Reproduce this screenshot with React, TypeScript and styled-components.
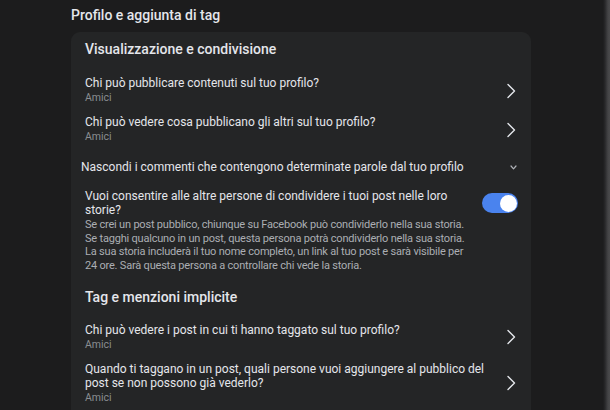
import { FC } from 'react';
import styled, { createGlobalStyle } from 'styled-components';

const GlobalStyle = createGlobalStyle`
    html, body {
        margin: 0;
        padding: 0;
        background: #1c1c1d;
    }
    body {
        font-family: Roboto, "Liberation Sans", sans-serif;
        color: #e4e6eb;
        -webkit-font-smoothing: antialiased;
    }
`;

const Page = styled.div`
    width: 610px;
    height: 410px;
    overflow: hidden;
    box-sizing: border-box;
    padding: 6px 0 0 71px;
    background: linear-gradient(to right, #1c1c1d 603px, #28282a 605px, #444446 608px, #4a4a4c 610px);
`;

const PageTitle = styled.h1`
    margin: 0 0 8px 0;
    font-size: 14px;
    line-height: 18px;
    font-weight: 500;
    color: #e4e6eb;
`;

const Card = styled.div`
    width: 460px;
    box-sizing: border-box;
    background: #242526;
    border-radius: 9px;
    padding: 7px 13px 20px 14px;
`;

const SectionTitle = styled.h2<{ $top?: number }>`
    margin: ${p => p.$top ?? 0}px 0 0 0;
    font-size: 14px;
    line-height: 20px;
    font-weight: 500;
    color: #e4e6eb;
`;

const List = styled.div<{ $top: number }>`
    display: flex;
    flex-direction: column;
    gap: 10px;
    margin-top: ${p => p.$top}px;
`;

const Row = styled.div`
    display: flex;
    align-items: center;
    justify-content: space-between;
    cursor: pointer;
`;

const RowText = styled.div`
    display: flex;
    flex-direction: column;
    max-width: 410px;
`;

const Label = styled.span`
    font-size: 12px;
    line-height: 14px;
    color: #e4e6eb;
`;

const Value = styled.span`
    margin-top: 1px;
    font-size: 10.5px;
    line-height: 14px;
    color: #8a8d91;
`;

const Chevron = styled.svg`
    flex: none;
    width: 10px;
    height: 16px;
    margin-right: 2px;
`;

const Accordion = styled.div`
    display: flex;
    align-items: center;
    justify-content: space-between;
    margin: 15px 0 0 -4px;
    cursor: pointer;
`;

const AccordionLabel = styled.span`
    font-size: 12px;
    line-height: 16px;
    color: #e4e6eb;
`;

const SmallChevron = styled.svg`
    flex: none;
    width: 7px;
    height: 5px;
    margin-right: 1px;
`;

const ToggleRow = styled.div`
    display: flex;
    align-items: flex-start;
    justify-content: space-between;
    margin-top: 15px;
`;

const ToggleText = styled.div`
    display: flex;
    flex-direction: column;
    max-width: 386px;
`;

const ToggleLabel = styled.span`
    font-size: 12px;
    line-height: 13.5px;
    color: #e4e6eb;
`;

const Description = styled.p`
    margin: 1px 0 0 0;
    font-size: 11px;
    letter-spacing: -0.2px;
    line-height: 13.7px;
    color: #abaeb3;
`;

const Switch = styled.div<{ $on: boolean }>`
    flex: none;
    position: relative;
    width: 36px;
    height: 20px;
    margin-top: 3px;
    border-radius: 10px;
    background: ${p => (p.$on ? '#4a83ee' : '#3a3b3c')};

    &::after {
        content: '';
        position: absolute;
        top: 1.5px;
        left: ${p => (p.$on ? '17.5px' : '1.5px')};
        width: 17px;
        height: 17px;
        border-radius: 50%;
        background: #ffffff;
    }
`;

const ChevronRight: FC = () => (
    <Chevron viewBox="0 0 10 16">
        <polyline points="2,1.5 8.5,8 2,14.5" fill="none" stroke="#e4e6eb" strokeWidth="1.4" strokeLinecap="round" strokeLinejoin="round" />
    </Chevron>
);

type Setting = { label: string; value: string };

const SettingRow: FC<Setting> = ({ label, value }) => (
    <Row>
        <RowText>
            <Label>{label}</Label>
            <Value>{value}</Value>
        </RowText>
        <ChevronRight />
    </Row>
);

const sharing: Setting[] = [
    { label: 'Chi può pubblicare contenuti sul tuo profilo?', value: 'Amici' },
    { label: 'Chi può vedere cosa pubblicano gli altri sul tuo profilo?', value: 'Amici' },
];

const tagging: Setting[] = [
    { label: 'Chi può vedere i post in cui ti hanno taggato sul tuo profilo?', value: 'Amici' },
    { label: 'Quando ti taggano in un post, quali persone vuoi aggiungere al pubblico del post se non possono già vederlo?', value: 'Amici' },
];

export default function App() {
    return (
        <>
            <GlobalStyle />
            <Page>
                <PageTitle>Profilo e aggiunta di tag</PageTitle>
                <Card>
                    <SectionTitle>Visualizzazione e condivisione</SectionTitle>
                    <List $top={17}>
                        {sharing.map(s => <SettingRow key={s.label} {...s} />)}
                    </List>

                    <Accordion>
                        <AccordionLabel>Nascondi i commenti che contengono determinate parole dal tuo profilo</AccordionLabel>
                        <SmallChevron viewBox="0 0 7 5">
                            <polyline points="1,1 3.5,3.8 6,1" fill="none" stroke="#b0b3b8" strokeWidth="1.2" strokeLinecap="round" strokeLinejoin="round" />
                        </SmallChevron>
                    </Accordion>

                    <ToggleRow>
                        <ToggleText>
                            <ToggleLabel>Vuoi consentire alle altre persone di condividere i tuoi post nelle loro storie?</ToggleLabel>
                            <Description>
                                Se crei un post pubblico, chiunque su Facebook può condividerlo nella sua storia.
                                Se tagghi qualcuno in un post, questa persona potrà condividerlo nella sua storia.
                                La sua storia includerà il tuo nome completo, un link al tuo post e sarà visibile per
                                24 ore. Sarà questa persona a controllare chi vede la storia.
                            </Description>
                        </ToggleText>
                        <Switch $on={true} />
                    </ToggleRow>

                    <SectionTitle $top={14}>Tag e menzioni implicite</SectionTitle>
                    <List $top={16}>
                        {tagging.map(s => <SettingRow key={s.label} {...s} />)}
                    </List>
                </Card>
            </Page>
        </>
    );
}
